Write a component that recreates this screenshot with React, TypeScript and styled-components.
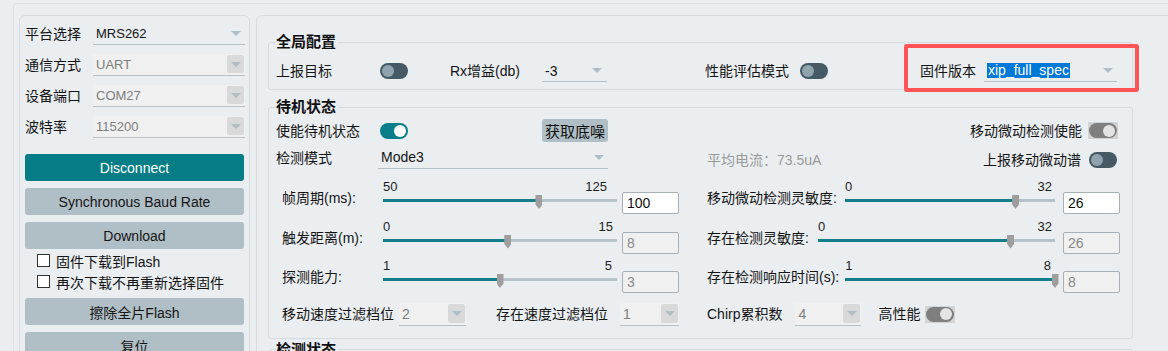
import React from "react";
import styled, { createGlobalStyle } from "styled-components";

const GlobalStyle = createGlobalStyle`
  html, body {
    margin: 0;
    padding: 0;
  }
  body {
    width: 1168px;
    height: 351px;
    overflow: hidden;
    background: #eaeef1;
    color: #141414;
    font-family: "Liberation Sans", "Noto Sans CJK SC", sans-serif;
    font-size: 14px;
  }
`;

type Tone = "off" | "on" | "muted";

const trackColor: Record<Tone, string> = {
  off: "#455a64",
  on: "#0b7f89",
  muted: "#7f7f7f",
};
const knobColor: Record<Tone, string> = {
  off: "#90a4ae",
  on: "#ffffff",
  muted: "#e4e4e4",
};

const Shell = styled.div`
  display: flex;
  gap: 6px;
  height: 420px;
  margin: 3px 0 0 13px;
  padding: 11px 0 0 5px;
  border-top: 1px solid #dde2e6;
  border-left: 1px solid #dde2e6;
  border-top-left-radius: 4px;
`;

/* ---------- left side ---------- */

const LeftCard = styled.aside`
  flex: none;
  width: 231px;
  box-sizing: border-box;
  padding: 7px 5px 0 5px;
  border: 1px solid #d8dde1;
  border-radius: 6px;
`;

const PortForm = styled.div`
  display: grid;
  grid-template-columns: 68px 152px;
  grid-auto-rows: 22px;
  row-gap: 9px;
  align-items: center;
  margin-right: -2px;
`;

const Label = styled.span<{ $w?: number; $muted?: boolean }>`
  flex: none;
  width: ${(p) => (p.$w ? `${p.$w}px` : "auto")};
  line-height: 20px;
  white-space: nowrap;
  color: ${(p) => (p.$muted ? "#9a9a9a" : "#141414")};
`;

const ActionButton = styled.button<{ $primary?: boolean; $mt: number }>`
  display: block;
  width: 100%;
  height: 27px;
  margin-top: ${(p) => p.$mt}px;
  padding: 0;
  border: none;
  border-radius: 3px;
  background: ${(p) => (p.$primary ? "#057d86" : "#b0bec5")};
  color: ${(p) => (p.$primary ? "#ffffff" : "#151515")};
  font: 14px "Liberation Sans", "Noto Sans CJK SC", sans-serif;
`;

const CheckList = styled.div`
  margin-top: 1px;
`;

const CheckRow = styled.label`
  display: flex;
  align-items: center;
  height: 21px;
  padding-left: 12px;
  white-space: nowrap;
`;

const CheckBox = styled.span`
  flex: none;
  width: 13px;
  height: 13px;
  box-sizing: border-box;
  margin-right: 6px;
  border: 1px solid #333;
  background: #fff;
`;

/* ---------- selects ---------- */

const SelectBox = styled.div<{ $w: number; $h: number; $fs: number; $disabled?: boolean }>`
  flex: none;
  display: flex;
  align-items: center;
  width: ${(p) => p.$w}px;
  height: ${(p) => p.$h}px;
  box-sizing: border-box;
  padding-left: 3px;
  border-bottom: 1px solid #b6c1c7;
  background: ${(p) => (p.$disabled ? "#f0f0f0" : "transparent")};
  color: ${(p) => (p.$disabled ? "#7d7d7d" : "#141414")};
  font-size: ${(p) => p.$fs}px;
  white-space: nowrap;
`;

const Highlight = styled.span`
  padding: 0 1px;
  line-height: 15px;
  background: #0078d7;
  color: #fff;
`;

const Caret = styled.span`
  width: 0;
  height: 0;
  border-left: 5px solid transparent;
  border-right: 5px solid transparent;
  border-top: 5px solid #b0bec5;
`;

const CaretSlot = styled.span<{ $pad: number }>`
  display: flex;
  margin-left: auto;
  padding-right: ${(p) => p.$pad}px;
`;

const CaretButton = styled.span`
  display: flex;
  align-items: center;
  justify-content: center;
  align-self: stretch;
  width: 17px;
  margin: 1px 1px 2px auto;
  border-radius: 2px;
  background: #d9d9d9;
`;

interface SelectProps {
  value: string;
  width: number;
  height?: number;
  fontSize?: number;
  disabled?: boolean;
  selected?: boolean;
  caretPad?: number;
}

const Select = ({ value, width, height = 22, fontSize = 14, disabled, selected, caretPad = 5 }: SelectProps) => (
  <SelectBox $w={width} $h={height} $fs={fontSize} $disabled={disabled}>
    {selected ? <Highlight>{value}</Highlight> : <span>{value}</span>}
    {disabled ? (
      <CaretButton>
        <Caret />
      </CaretButton>
    ) : (
      <CaretSlot $pad={caretPad}>
        <Caret />
      </CaretSlot>
    )}
  </SelectBox>
);

/* ---------- switches ---------- */

const SwitchFrame = styled.span<{ $muted: boolean; $ml: number; $mr: number }>`
  flex: none;
  display: inline-flex;
  margin-left: ${(p) => p.$ml}px;
  margin-right: ${(p) => p.$mr}px;
  padding: ${(p) => (p.$muted ? "1px" : "0")};
  background: ${(p) => (p.$muted ? "#d3d3d3" : "transparent")};
`;

const SwitchTrack = styled.span<{ $tone: Tone }>`
  display: flex;
  align-items: center;
  justify-content: ${(p) => (p.$tone === "off" ? "flex-start" : "flex-end")};
  width: 28px;
  height: ${(p) => (p.$tone === "muted" ? 15 : 16)}px;
  box-sizing: border-box;
  padding: 0 2px;
  border-radius: 8px;
  background: ${(p) => trackColor[p.$tone]};
`;

const SwitchKnob = styled.span<{ $tone: Tone }>`
  width: 12px;
  height: 12px;
  border-radius: 50%;
  background: ${(p) => knobColor[p.$tone]};
`;

const Switch = ({ tone, ml = 0, mr = 0 }: { tone: Tone; ml?: number; mr?: number }) => (
  <SwitchFrame $muted={tone === "muted"} $ml={ml} $mr={mr}>
    <SwitchTrack $tone={tone}>
      <SwitchKnob $tone={tone} />
    </SwitchTrack>
  </SwitchFrame>
);

/* ---------- main side ---------- */

const MainCard = styled.main`
  flex: none;
  width: 960px;
  box-sizing: border-box;
  padding: 18px 0 0 11px;
  border: 1px solid #d8dde1;
  border-radius: 6px;
`;

const Group = styled.fieldset<{ $mt: number; $pad: string }>`
  width: 865px;
  min-inline-size: 0;
  box-sizing: border-box;
  margin: ${(p) => p.$mt}px 0 0;
  padding: ${(p) => p.$pad};
  border: 1px solid #d5dadf;
  border-radius: 3px;
`;

const GroupTitle = styled.legend`
  padding: 0 2px 0 0;
  font-size: 15px;
  font-weight: bold;
  line-height: 16px;
  color: #111;
`;

const GlobalRow = styled.div`
  display: grid;
  grid-template-columns: 104px 70px 92px 65px 98px 95px 120px auto;
  align-items: center;
  height: 30px;
`;

// the red frame is a highlight drawn over the firmware field
const FirmwareField = styled.div`
  position: relative;
  display: flex;
  align-items: center;
  align-self: stretch;
  justify-self: start;

  &::after {
    content: "";
    position: absolute;
    left: -16px;
    right: -22px;
    top: -12px;
    bottom: -6px;
    border: 4px solid #ff5454;
    border-radius: 3px;
    pointer-events: none;
  }
`;

const FieldGap = styled.span<{ $w: number }>`
  flex: none;
  width: ${(p) => p.$w}px;
`;

const StandbyRow = styled.div<{ $h: number; $mt?: number }>`
  display: grid;
  grid-template-columns: 403px 413px;
  column-gap: 28px;
  height: ${(p) => p.$h}px;
  margin-top: ${(p) => p.$mt ?? 0}px;
`;

const Cell = styled.div<{ $indent?: number; $top?: boolean; $end?: boolean; $drop?: number; $w?: number }>`
  display: flex;
  align-items: ${(p) => (p.$top ? "flex-start" : "center")};
  justify-content: ${(p) => (p.$end ? "flex-end" : "flex-start")};
  width: ${(p) => (p.$w ? `${p.$w}px` : "auto")};
  padding-left: ${(p) => p.$indent ?? 0}px;
  padding-top: ${(p) => p.$drop ?? 0}px;
  box-sizing: border-box;
`;

const GhostButton = styled.button`
  flex: none;
  height: 23px;
  margin-left: auto;
  padding: 0 3px;
  border: none;
  border-radius: 3px;
  background: #b0bec5;
  color: #111;
  font: 15px "Liberation Sans", "Noto Sans CJK SC", sans-serif;
`;

const Spacer = styled.span<{ $w: number; $grow?: boolean }>`
  flex: ${(p) => (p.$grow ? "1" : "none")};
  width: ${(p) => p.$w}px;
`;

/* ---------- slider ---------- */

const SliderLabel = styled.span<{ $w?: number; $mr: number }>`
  flex: none;
  width: ${(p) => (p.$w ? `${p.$w}px` : "auto")};
  margin: 8px ${(p) => p.$mr}px 0 0;
  line-height: 20px;
  white-space: nowrap;
`;

const SliderBox = styled.div`
  flex: 1;
  min-width: 0;
`;

const Scale = styled.div<{ $padR: number }>`
  display: flex;
  justify-content: space-between;
  height: 14px;
  padding-right: ${(p) => p.$padR}px;
  font-size: 13px;
  line-height: 14px;
  color: #1e1e1e;
`;

const TrackArea = styled.div`
  position: relative;
  height: 15px;
  box-sizing: border-box;
  padding-top: 5px;
`;

const TrackLine = styled.div`
  height: 3px;
  background: #b6c2c8;
`;

const TrackFill = styled.div`
  height: 100%;
  background: #137f89;
`;

const Handle = styled.span`
  position: absolute;
  top: 1px;
  width: 7px;
  height: 14px;
  background: #9e9e9e;
  clip-path: polygon(0 0, 100% 0, 100% 68%, 50% 100%, 0 68%);
`;

const ValueInput = styled.input<{ $ml: number }>`
  flex: none;
  width: 57px;
  height: 22px;
  box-sizing: border-box;
  margin: 12px 0 0 ${(p) => p.$ml}px;
  padding: 0 0 0 4px;
  border: 1px solid #a6b0b6;
  border-radius: 2px;
  background: ${(p) => (p.disabled ? "#f0f0f0" : "#ffffff")};
  color: ${(p) => (p.disabled ? "#8a8a8a" : "#111")};
  font: 14px "Liberation Sans", sans-serif;
  outline: none;
`;

interface SliderProps {
  label: string;
  min: number;
  max: number;
  value: number;
  disabled?: boolean;
  labelWidth?: number;
  labelGap: number;
  inputGap: number;
  scalePad: number;
}

const SliderField = ({ label, min, max, value, disabled, labelWidth, labelGap, inputGap, scalePad }: SliderProps) => {
  const pct = ((value - min) / (max - min)) * 100;
  return (
    <>
      <SliderLabel $w={labelWidth} $mr={labelGap}>
        {label}
      </SliderLabel>
      <SliderBox>
        <Scale $padR={scalePad}>
          <span>{min}</span>
          <span>{max}</span>
        </Scale>
        <TrackArea>
          <TrackLine>
            <TrackFill style={{ width: `${pct}%` }} />
          </TrackLine>
          <Handle style={{ left: `calc(${pct}% - 3.5px)` }} />
        </TrackArea>
      </SliderBox>
      <ValueInput $ml={inputGap} value={String(value)} disabled={disabled} readOnly />
    </>
  );
};

const App: React.FC = () => {
  return (
    <>
      <GlobalStyle />
      <Shell>
        <LeftCard>
          <PortForm>
            <Label>平台选择</Label>
            <Select value="MRS262" width={152} height={22} fontSize={13} caretPad={4} />
            <Label>通信方式</Label>
            <Select value="UART" width={152} height={22} fontSize={13} disabled />
            <Label>设备端口</Label>
            <Select value="COM27" width={152} height={22} fontSize={13} disabled />
            <Label>波特率</Label>
            <Select value="115200" width={152} height={22} fontSize={13} disabled />
          </PortForm>
          <ActionButton $primary $mt={16}>
            Disconnect
          </ActionButton>
          <ActionButton $mt={7}>Synchronous Baud Rate</ActionButton>
          <ActionButton $mt={7}>Download</ActionButton>
          <CheckList>
            <CheckRow>
              <CheckBox />
              固件下载到Flash
            </CheckRow>
            <CheckRow>
              <CheckBox />
              再次下载不再重新选择固件
            </CheckRow>
          </CheckList>
          <ActionButton $mt={6}>擦除全片Flash</ActionButton>
          <ActionButton $mt={7}>复位</ActionButton>
        </LeftCard>

        <MainCard>
          <Group $mt={0} $pad="6px 0 3px 7px">
            <GroupTitle>全局配置</GroupTitle>
            <GlobalRow>
              <Label>上报目标</Label>
              <Cell>
                <Switch tone="off" />
              </Cell>
              <Label>Rx增益(db)</Label>
              <Select value="-3" width={65} />
              <span />
              <Label>性能评估模式</Label>
              <Cell>
                <Switch tone="off" />
              </Cell>
              <FirmwareField>
                <Label $w={56}>固件版本</Label>
                <FieldGap $w={8} />
                <Select value="xip_full_spec" width={133} selected caretPad={4} />
              </FirmwareField>
            </GlobalRow>
          </Group>

          <Group $mt={9} $pad="3px 0 8px 7px">
            <GroupTitle>待机状态</GroupTitle>

            <StandbyRow $h={25}>
              <Cell $w={332}>
                <Label $w={104}>使能待机状态</Label>
                <Switch tone="on" />
                <GhostButton>获取底噪</GhostButton>
              </Cell>
              <Cell $end>
                <Label>移动微动检测使能</Label>
                <Switch tone="muted" ml={6} mr={2} />
              </Cell>
            </StandbyRow>

            <StandbyRow $h={25} $mt={2}>
              <Cell>
                <Label $w={102}>检测模式</Label>
                <Select value="Mode3" width={230} caretPad={4} />
              </Cell>
              <Cell $drop={5}>
                <Label $muted>平均电流：73.5uA</Label>
                <Spacer $w={0} $grow />
                <Label>上报移动微动谱</Label>
                <Switch tone="off" ml={8} mr={3} />
              </Cell>
            </StandbyRow>

            <StandbyRow $h={39.5} $mt={10}>
              <Cell $top $indent={6}>
                <SliderField label="帧周期(ms):" min={50} max={125} value={100} labelWidth={101} labelGap={0} inputGap={5} scalePad={10} />
              </Cell>
              <Cell $top>
                <SliderField label="移动微动检测灵敏度:" min={0} max={32} value={26} labelGap={8} inputGap={8} scalePad={3} />
              </Cell>
            </StandbyRow>

            <StandbyRow $h={39.5}>
              <Cell $top $indent={6}>
                <SliderField label="触发距离(m):" min={0} max={15} value={8} disabled labelWidth={101} labelGap={0} inputGap={5} scalePad={4} />
              </Cell>
              <Cell $top>
                <SliderField label="存在检测灵敏度:" min={0} max={32} value={26} disabled labelGap={9} inputGap={8} scalePad={3} />
              </Cell>
            </StandbyRow>

            <StandbyRow $h={39.5}>
              <Cell $top $indent={6}>
                <SliderField label="探测能力:" min={1} max={5} value={3} disabled labelWidth={101} labelGap={0} inputGap={5} scalePad={5} />
              </Cell>
              <Cell $top>
                <SliderField label="存在检测响应时间(s):" min={1} max={8} value={8} disabled labelGap={6} inputGap={8} scalePad={4} />
              </Cell>
            </StandbyRow>

            <StandbyRow $h={31}>
              <Cell $indent={6}>
                <Label>移动速度过滤档位</Label>
                <Spacer $w={5} />
                <Select value="2" width={67} height={23} disabled />
                <Spacer $w={30} />
                <Label>存在速度过滤档位</Label>
                <Spacer $w={12} />
                <Select value="1" width={59} height={23} disabled />
              </Cell>
              <Cell>
                <Label>Chirp累积数</Label>
                <Spacer $w={13} />
                <Select value="4" width={66} height={23} disabled />
                <Spacer $w={17} />
                <Label>高性能</Label>
                <Switch tone="muted" ml={5} />
              </Cell>
            </StandbyRow>
          </Group>

          <Group $mt={3} $pad="3px 0 8px 7px">
            <GroupTitle>检测状态</GroupTitle>
            <StandbyRow $h={40} />
          </Group>
        </MainCard>
      </Shell>
    </>
  );
};

export default App;
